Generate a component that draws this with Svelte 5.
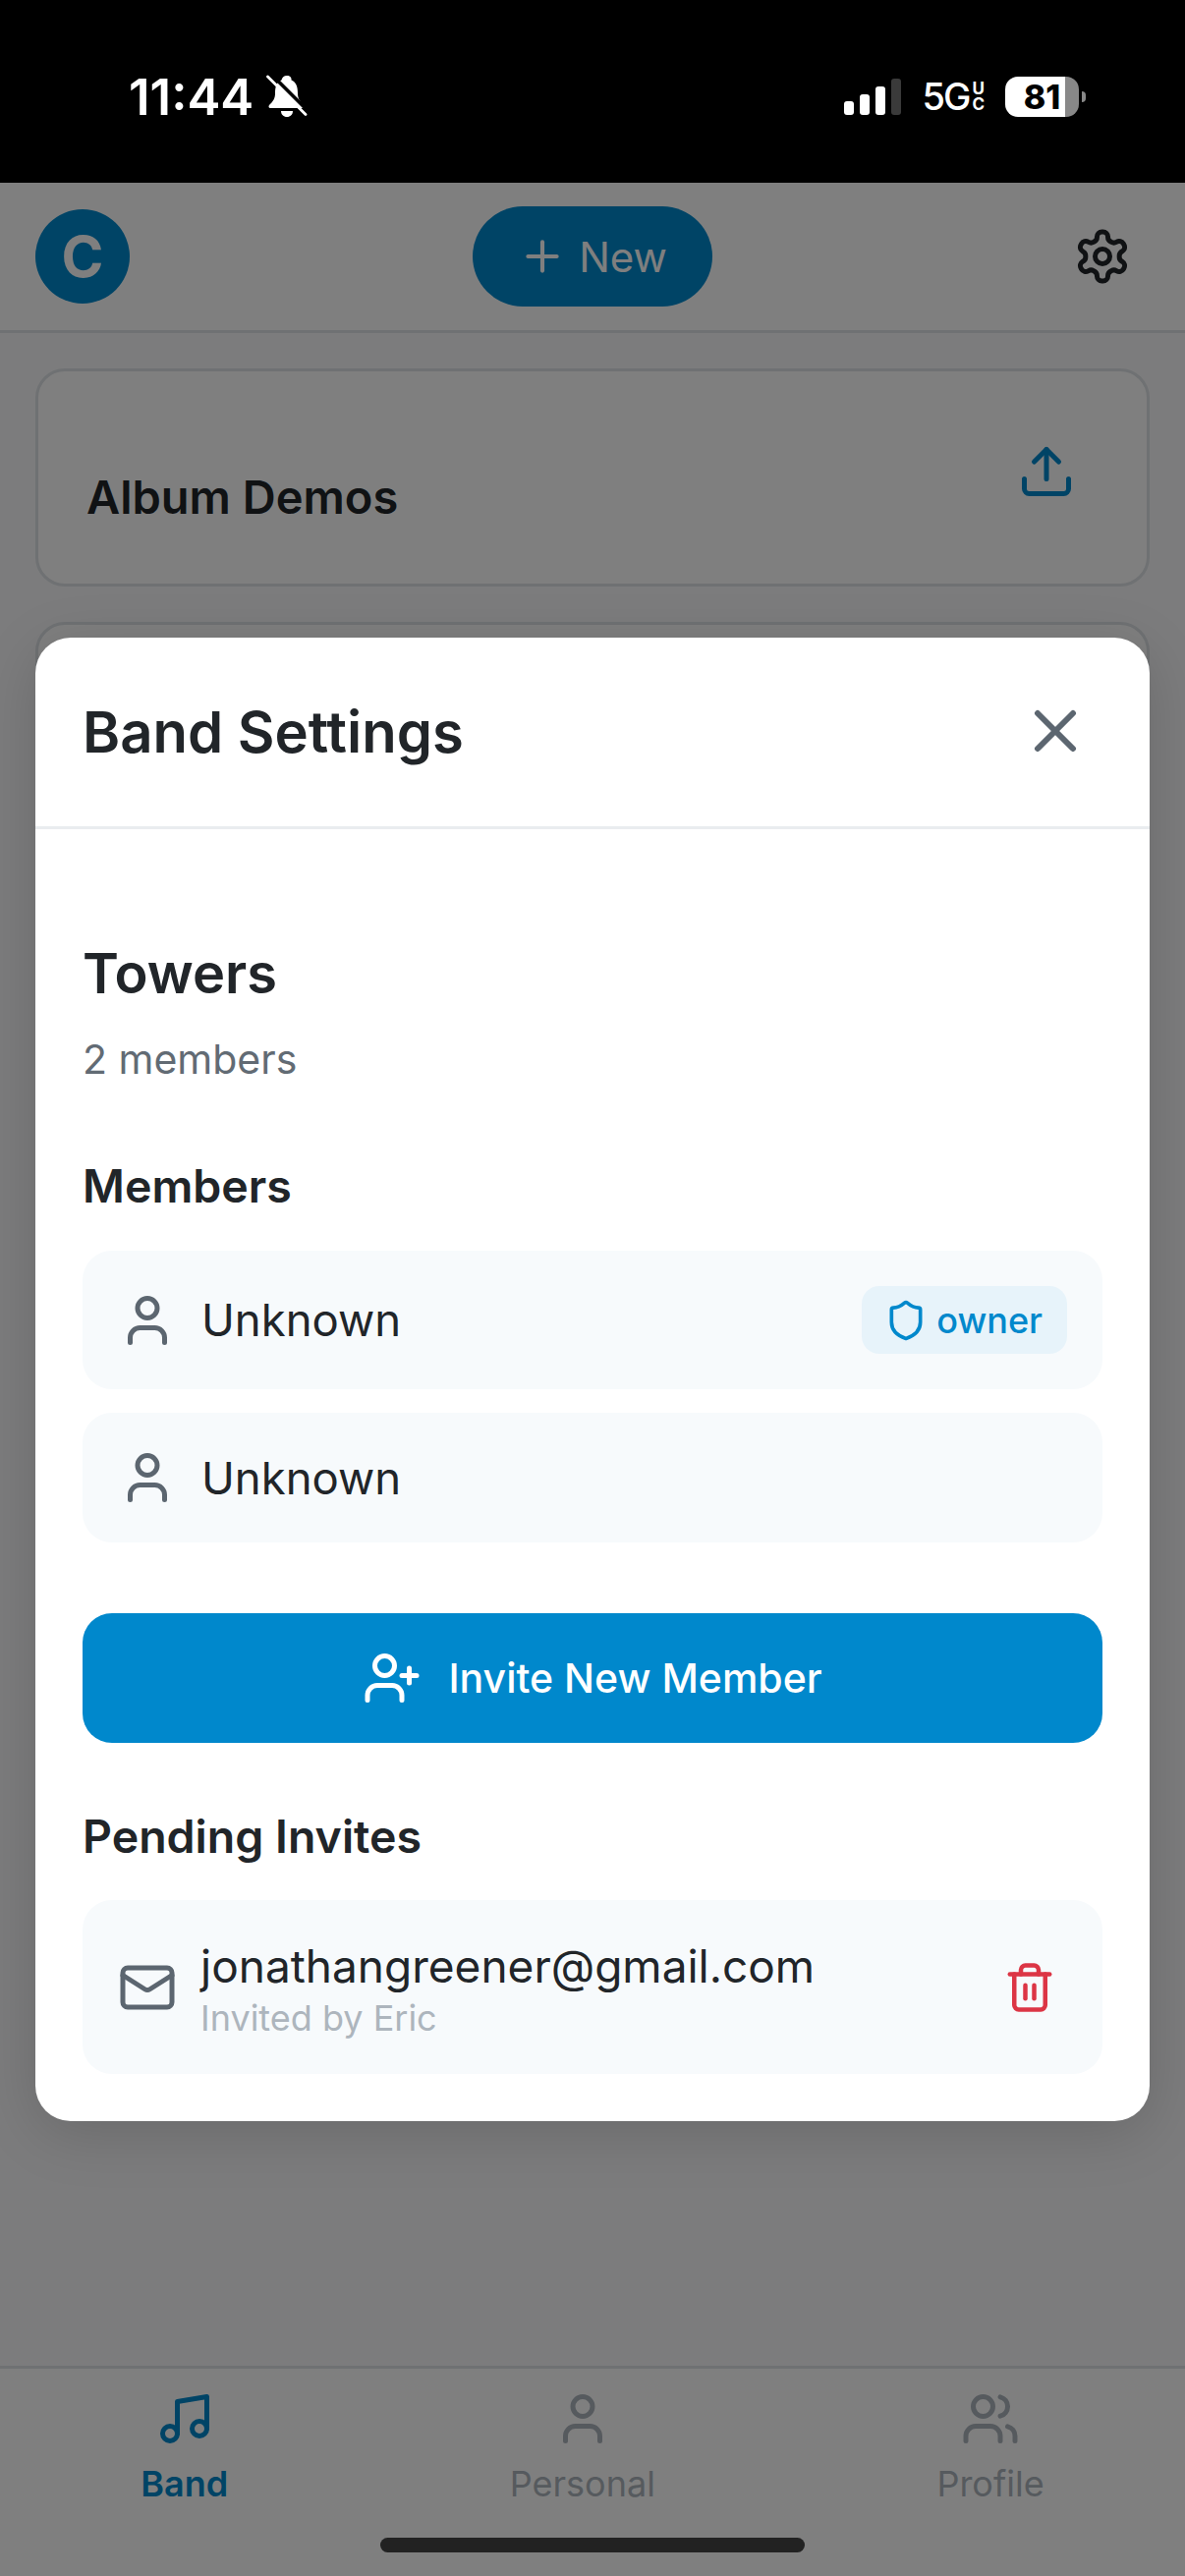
<script>
  const members = [
    { name: 'Unknown', role: 'owner' },
    { name: 'Unknown', role: null }
  ];

  const tabs = [
    { label: 'Band', icon: 'music', active: true },
    { label: 'Personal', icon: 'user', active: false },
    { label: 'Profile', icon: 'users', active: false }
  ];
</script>

{#snippet icon(name, size, cls = '')}
  <svg class={cls} width={size} height={size} viewBox="0 0 24 24" fill="none" stroke="currentColor" stroke-width="2" stroke-linecap="round" stroke-linejoin="round">
    {#if name === 'user'}
      <path d="M19 21v-2a4 4 0 0 0-4-4H9a4 4 0 0 0-4 4v2" /><circle cx="12" cy="7" r="4" />
    {:else if name === 'users'}
      <path d="M16 21v-2a4 4 0 0 0-4-4H6a4 4 0 0 0-4 4v2" /><circle cx="9" cy="7" r="4" /><path d="M22 21v-2a4 4 0 0 0-3-3.87" /><path d="M16 3.13a4 4 0 0 1 0 7.75" />
    {:else if name === 'music'}
      <path d="M9 18V5l12-2v13" /><circle cx="6" cy="18" r="3" /><circle cx="18" cy="16" r="3" />
    {:else if name === 'plus'}
      <path d="M5 12h14" /><path d="M12 5v14" />
    {:else if name === 'settings'}
      <path d="M12.22 2h-.44a2 2 0 0 0-2 2v.18a2 2 0 0 1-1 1.73l-.43.25a2 2 0 0 1-2 0l-.15-.08a2 2 0 0 0-2.73.73l-.22.38a2 2 0 0 0 .73 2.73l.15.1a2 2 0 0 1 1 1.72v.51a2 2 0 0 1-1 1.74l-.15.09a2 2 0 0 0-.73 2.73l.22.38a2 2 0 0 0 2.73.73l.15-.08a2 2 0 0 1 2 0l.43.25a2 2 0 0 1 1 1.73V20a2 2 0 0 0 2 2h.44a2 2 0 0 0 2-2v-.18a2 2 0 0 1 1-1.73l.43-.25a2 2 0 0 1 2 0l.15.08a2 2 0 0 0 2.73-.73l.22-.39a2 2 0 0 0-.73-2.73l-.15-.08a2 2 0 0 1-1-1.74v-.5a2 2 0 0 1 1-1.74l.15-.09a2 2 0 0 0 .73-2.73l-.22-.38a2 2 0 0 0-2.73-.73l-.15.08a2 2 0 0 1-2 0l-.43-.25a2 2 0 0 1-1-1.73V4a2 2 0 0 0-2-2z" /><circle cx="12" cy="12" r="3" />
    {:else if name === 'upload'}
      <path d="M21 15v4a2 2 0 0 1-2 2H5a2 2 0 0 1-2-2v-4" /><polyline points="17 8 12 3 7 8" /><line x1="12" y1="3" x2="12" y2="15" />
    {:else if name === 'x'}
      <path d="M18 6 6 18" /><path d="m6 6 12 12" />
    {:else if name === 'shield'}
      <path d="M20 13c0 5-3.5 7.5-7.66 8.95a1 1 0 0 1-.67-.01C7.5 20.5 4 18 4 13V6a1 1 0 0 1 1-1c2 0 4.5-1.2 6.24-2.72a1.17 1.17 0 0 1 1.52 0C14.51 3.81 17 5 19 5a1 1 0 0 1 1 1z" />
    {:else if name === 'user-plus'}
      <path d="M16 21v-2a4 4 0 0 0-4-4H6a4 4 0 0 0-4 4v2" /><circle cx="9" cy="7" r="4" /><line x1="19" y1="8" x2="19" y2="14" /><line x1="22" y1="11" x2="16" y2="11" />
    {:else if name === 'mail'}
      <rect x="2" y="4" width="20" height="16" rx="2" /><path d="m22 7-8.97 5.7a1.94 1.94 0 0 1-2.06 0L2 7" />
    {:else if name === 'trash'}
      <path d="M3 6h18" /><path d="M19 6v14c0 1-1 2-2 2H7c-1 0-2-1-2-2V6" /><path d="M8 6V4c0-1 1-2 2-2h4c1 0 2 1 2 2v2" /><line x1="10" y1="11" x2="10" y2="17" /><line x1="14" y1="11" x2="14" y2="17" />
    {/if}
  </svg>
{/snippet}

<div class="phone">
  <div class="status">
    <div class="status-left">
      <span class="time">11:44</span>
      <svg class="bell" width="42" height="44" viewBox="0 0 42 44">
        <path d="M21 1c-3 0-5 2-5.500 4.500C10 8 9 13 9 19c0 5-2 8-6 12-1 1-.5 3 1 3h33c1.500 0 2-2 1-3-4-4-6-7-6-12 0-6-1-11-6.500-13.500C26 3 24 1 21 1z" fill="#fff" />
        <path d="M15 37h12c0 3.500-2.500 6-6 6s-6-2.500-6-6z" fill="#fff" />
        <line x1="4.500" y1="-1" x2="44" y2="38.500" stroke="#000" stroke-width="3.500" />
        <line x1="1.500" y1="2" x2="40" y2="40.500" stroke="#fff" stroke-width="2.800" stroke-linecap="round" />
      </svg>
    </div>
    <div class="status-right">
      <div class="signal">
        <i class="bar b1"></i><i class="bar b2"></i><i class="bar b3"></i><i class="bar b4"></i>
      </div>
      <div class="net">
        <span class="five-g">5G</span>
        <span class="uc"><b>U</b><b>C</b></span>
      </div>
      <div class="battery"><span>81</span></div>
      <i class="nub"></i>
    </div>
  </div>

  <header class="app-header">
    <div class="avatar">C</div>
    <button class="new-btn">{@render icon('plus', 50)}<span>New</span></button>
    <button class="gear">{@render icon('settings', 60)}</button>
  </header>

  <main class="content">
    <div class="card">
      <span class="card-title">Album Demos</span>
      {@render icon('upload', 60, 'card-icon')}
    </div>
    <div class="card"></div>
  </main>

  <nav class="tabs">
    {#each tabs as tab}
      <div class="tab" class:active={tab.active}>
        {@render icon(tab.icon, 60)}
        <span>{tab.label}</span>
      </div>
    {/each}
  </nav>

  <div class="overlay">
    <section class="modal">
      <div class="modal-head">
        <h2>Band Settings</h2>
        <button class="close">{@render icon('x', 72)}</button>
      </div>
      <div class="modal-body">
        <h3 class="band-name">Towers</h3>
        <p class="count">2 members</p>

        <h4 class="section first">Members</h4>
        <div class="rows">
          {#each members as m}
            <div class="row">
              {@render icon('user', 60, 'row-icon')}
              <span class="name">{m.name}</span>
              {#if m.role}
                <span class="badge">{@render icon('shield', 44)}{m.role}</span>
              {/if}
            </div>
          {/each}
        </div>

        <button class="invite">{@render icon('user-plus', 60)}<span>Invite New Member</span></button>

        <h4 class="section pending">Pending Invites</h4>
        <div class="invite-row">
          {@render icon('mail', 60, 'row-icon')}
          <div class="invite-text">
            <span class="email">jonathangreener@gmail.com</span>
            <span class="by">Invited by Eric</span>
          </div>
          <button class="trash">{@render icon('trash', 54)}</button>
        </div>
      </div>
    </section>
  </div>

  <div class="home-bar"></div>
</div>

<style>
  :global(body) {
    margin: 0;
    font-family: Inter, "Liberation Sans", sans-serif;
  }

  button {
    font: inherit;
    border: none;
    background: none;
    padding: 0;
    display: flex;
    align-items: center;
  }

  .phone {
    position: relative;
    width: 1206px;
    height: 2622px;
    display: flex;
    flex-direction: column;
    overflow: hidden;
    background: #fff;
    color: #212529;
  }

  .status {
    height: 186px;
    flex: none;
    background: #000;
    color: #fff;
    display: flex;
    justify-content: space-between;
    box-sizing: border-box;
    padding: 0 101px 0 131px;
    position: relative;
    z-index: 5;
  }

  .status-left {
    display: flex;
    align-items: center;
    gap: 13px;
    height: 196px;
  }

  .time {
    font-size: 51px;
    font-weight: 600;
    line-height: 1;
  }

  .status-right {
    display: flex;
    align-items: center;
    height: 196px;
  }

  .signal {
    display: flex;
    align-items: flex-end;
    gap: 6px;
    height: 37px;
    margin-right: 22px;
  }

  .bar {
    width: 10px;
    border-radius: 3px;
    background: #fff;
  }

  .b1 { height: 14px; }
  .b2 { height: 21px; }
  .b3 { height: 29px; }
  .b4 { height: 37px; background: #3a3a3a; }

  .net {
    display: flex;
    align-items: center;
    gap: 3px;
    margin-right: 21px;
  }

  .five-g {
    font-size: 38px;
    font-weight: 500;
    letter-spacing: -2px;
    line-height: 1;
  }

  .uc {
    display: flex;
    flex-direction: column;
    gap: 3px;
  }

  .uc b {
    font-size: 17px;
    line-height: 13px;
    font-weight: 700;
  }

  .battery {
    width: 75px;
    height: 41px;
    border-radius: 13px;
    background: linear-gradient(to right, #fff 81%, #888 81%);
    display: flex;
    align-items: center;
    justify-content: center;
    color: #000;
    font-size: 34px;
    font-weight: 800;
  }

  .nub {
    width: 4px;
    height: 11px;
    margin-left: 3px;
    background: #888;
    border-radius: 0 6px 6px 0;
  }

  .app-header {
    height: 153px;
    flex: none;
    box-sizing: border-box;
    padding: 0 36px;
    display: grid;
    grid-template-columns: 1fr auto 1fr;
    align-items: center;
    border-bottom: 3px solid #dee2e6;
  }

  .avatar {
    width: 96px;
    height: 96px;
    border-radius: 50%;
    background: #0088cc;
    color: #fff;
    font-size: 58px;
    font-weight: 700;
    display: flex;
    align-items: center;
    justify-content: center;
  }

  .new-btn {
    width: 244px;
    height: 102px;
    border-radius: 51px;
    background: #0088cc;
    color: #fff;
    font-size: 42px;
    font-weight: 400;
    justify-content: center;
    gap: 12px;
  }

  .gear {
    justify-self: end;
    margin-right: 18px;
    color: #212529;
  }

  .content {
    flex: 1;
    background: #f8f9fa;
    padding: 36px 36px 0;
    display: flex;
    flex-direction: column;
    gap: 36px;
  }

  .card {
    height: 222px;
    flex: none;
    box-sizing: border-box;
    background: #fff;
    border: 3px solid #dee2e6;
    border-radius: 30px;
    padding: 0 72px 0 49px;
    display: flex;
    align-items: center;
    justify-content: space-between;
  }

  .card-title {
    font-size: 47px;
    font-weight: 600;
    margin-top: 38px;
  }

  .card :global(.card-icon) {
    color: #0088cc;
    margin-bottom: 12px;
  }

  .tabs {
    height: 214px;
    flex: none;
    box-sizing: border-box;
    border-top: 3px solid #dee2e6;
    background: #fff;
    display: flex;
    justify-content: space-around;
    padding-top: 21px;
    color: #adb5bd;
  }

  .tab {
    display: flex;
    flex-direction: column;
    align-items: center;
    gap: 14px;
    font-size: 36px;
    font-weight: 400;
  }

  .tab.active {
    color: #0088cc;
    font-weight: 600;
  }

  .overlay {
    position: absolute;
    inset: 186px 0 0;
    background: rgba(0, 0, 0, 0.5);
    display: flex;
    align-items: center;
    justify-content: center;
    z-index: 2;
  }

  .modal {
    width: 1134px;
    flex: none;
    background: #fff;
    border-radius: 36px;
    box-shadow: 0 12px 60px rgba(0, 0, 0, 0.15);
    display: flex;
    flex-direction: column;
  }

  .modal-head {
    height: 195px;
    flex: none;
    box-sizing: border-box;
    border-bottom: 3px solid #e9ecef;
    padding: 0 60px 0 48px;
    display: flex;
    align-items: center;
    justify-content: space-between;
  }

  h2, h3, h4, p {
    margin: 0;
  }

  h2 {
    font-size: 58px;
    font-weight: 600;
    line-height: 72px;
  }

  .close {
    color: #5c6670;
    margin-top: -2px;
  }

  .modal-body {
    padding: 111px 48px 48px;
  }

  .band-name {
    font-size: 56px;
    font-weight: 600;
    line-height: 72px;
  }

  .count {
    font-size: 41px;
    line-height: 54px;
    margin-top: 24px;
    color: #626b74;
  }

  .section {
    font-size: 46.500px;
    font-weight: 600;
    line-height: 54px;
  }

  .section.first { margin-top: 75px; }
  .section.pending { margin-top: 68px; }

  .rows {
    margin-top: 39px;
    display: flex;
    flex-direction: column;
    gap: 24px;
  }

  .row {
    box-sizing: border-box;
    background: #f7fafc;
    border-radius: 30px;
    padding: 36px;
    display: flex;
    align-items: center;
  }

  :global(.row-icon) {
    color: #5c6670;
    flex: none;
  }

  .name {
    font-size: 45.500px;
    margin-left: 25px;
    flex: 1;
  }

  .badge {
    height: 69px;
    box-sizing: border-box;
    background: #e7f3fa;
    color: #0088cc;
    border-radius: 18px;
    padding: 0 25px 0 23px;
    display: flex;
    align-items: center;
    gap: 9px;
    font-size: 36px;
    font-weight: 500;
  }

  .invite {
    margin-top: 72px;
    width: 100%;
    height: 132px;
    background: #0088cc;
    color: #fff;
    border-radius: 30px;
    justify-content: center;
    gap: 27px;
    font-size: 41px;
    font-weight: 500;
  }

  .invite-row {
    margin-top: 38px;
    height: 177px;
    box-sizing: border-box;
    background: #f7fafc;
    border-radius: 30px;
    padding: 0 47px 0 36px;
    display: flex;
    align-items: center;
  }

  .invite-text {
    flex: 1;
    margin-left: 24px;
    padding-top: 3px;
    display: flex;
    flex-direction: column;
  }

  .email {
    font-size: 46px;
    line-height: 56px;
  }

  .by {
    font-size: 36px;
    line-height: 44px;
    margin-top: 3px;
    color: #adb5bd;
  }

  .trash {
    color: #dc3545;
  }

  .home-bar {
    position: absolute;
    left: 387px;
    bottom: 24px;
    width: 432px;
    height: 15px;
    border-radius: 8px;
    background: #222;
    z-index: 3;
  }
</style>
